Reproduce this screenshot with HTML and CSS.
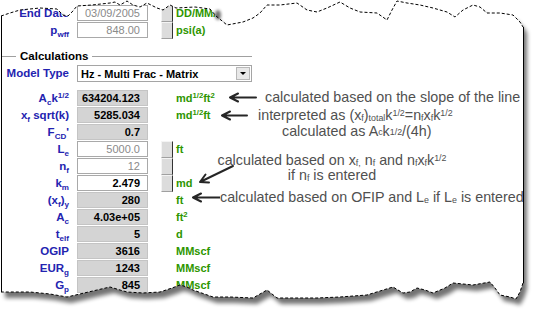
FILE: index.html
```html
<!DOCTYPE html>
<html lang="en">

<head>
    <meta charset="UTF-8">
    <title>Calculations</title>
    <link rel="stylesheet" href="styles.css">
</head>

<body>
    <div class="sheet">
        <div class="row">
            <span class="label">End Date</span>
            <span class="box">03/09/2005</span>
            <span class="btn"></span>
            <div class="tail"><span class="unit">DD/MM/YYYY</span></div>
        </div>
        <div class="row">
            <span class="label">p<sub>wff</sub></span>
            <span class="box">848.00</span>
            <span class="btn"></span>
            <div class="tail"><span class="unit">psi(a)</span></div>
        </div>

        <div class="legend"><span>Calculations</span></div>

        <div class="row model">
            <span class="label">Model Type</span>
            <div class="select">
                <span class="select-text">Hz - Multi Frac - Matrix</span>
                <span class="drop"><i class="tri"></i></span>
            </div>
        </div>

        <div class="calc">
            <div class="row">
                <span class="label">A<sub>c</sub>k<sup>1/2</sup></span>
                <span class="box val">634204.123</span>
                <div class="tail">
                    <span class="unit">md<sup>1/2</sup>ft<sup>2</sup></span>
                    <div class="note note-slope">
                        <svg class="arrow" width="28" height="11" viewBox="0 0 28 11"><path d="M1 5.5H27M1 5.5L9 1.5M1 5.5L9 9.5" /></svg>
                        <span>calculated based on the slope of the line</span>
                    </div>
                </div>
            </div>
            <div class="row">
                <span class="label">x<sub>f</sub> sqrt(k)</span>
                <span class="box val">5285.034</span>
                <div class="tail">
                    <span class="unit">md<sup>1/2</sup>ft</span>
                    <div class="note note-interp">
                        <svg class="arrow" width="27" height="11" viewBox="0 0 27 11"><path d="M1 5.5H26M1 5.5L9 1.5M1 5.5L9 9.5" /></svg>
                        <span>interpreted as (x<sub>f</sub>)<sub>total</sub>k<sup>1/2</sup>=n<sub>f</sub>x<sub>f</sub>k<sup>1/2</sup></span>
                    </div>
                </div>
            </div>
            <div class="row">
                <span class="label">F<sub>CD</sub>'</span>
                <span class="box val">0.7</span>
                <div class="tail">
                    <div class="note note-as">calculated as A<sub>c</sub>k<sup>1/2</sup>/(4h)</div>
                </div>
            </div>
            <div class="row">
                <span class="label">L<sub>e</sub></span>
                <span class="box">5000.0</span>
                <span class="btn"></span>
                <div class="tail">
                    <span class="unit">ft</span>
                    <div class="note note-block">
                        calculated based on x<sub>f,</sub> n<sub>f</sub> and n<sub>f</sub>x<sub>f</sub>k<sup>1/2</sup><br>
                        if n<sub>f</sub> is entered
                    </div>
                </div>
            </div>
            <div class="row">
                <span class="label">n<sub>f</sub></span>
                <span class="box">12</span>
                <span class="btn"></span>
            </div>
            <div class="row">
                <span class="label">k<sub>m</sub></span>
                <span class="box dark">2.479</span>
                <span class="btn"></span>
                <div class="tail">
                    <span class="unit">md</span>
                    <svg class="arrow diag" width="38" height="22" viewBox="0 0 38 22"><path d="M35 3L2 19M2 19L7.5 11.5M2 19L11 19.5" /></svg>
                </div>
            </div>
            <div class="row">
                <span class="label">(x<sub>f</sub>)<sub>y</sub></span>
                <span class="box val">280</span>
                <div class="tail">
                    <span class="unit">ft</span>
                    <div class="note note-ofip">
                        <svg class="arrow" width="28" height="11" viewBox="0 0 28 11"><path d="M1 5.5H28M1 5.5L9 1.5M1 5.5L9 9.5" /></svg>
                        <span>calculated based on OFIP and L<sub>e</sub> if L<sub>e</sub> is entered</span>
                    </div>
                </div>
            </div>
            <div class="row">
                <span class="label">A<sub>c</sub></span>
                <span class="box val">4.03e+05</span>
                <div class="tail"><span class="unit">ft<sup>2</sup></span></div>
            </div>
            <div class="row">
                <span class="label">t<sub>elf</sub></span>
                <span class="box val">5</span>
                <div class="tail"><span class="unit">d</span></div>
            </div>
            <div class="row">
                <span class="label">OGIP</span>
                <span class="box val">3616</span>
                <div class="tail"><span class="unit">MMscf</span></div>
            </div>
            <div class="row">
                <span class="label">EUR<sub>g</sub></span>
                <span class="box val">1243</span>
                <div class="tail"><span class="unit">MMscf</span></div>
            </div>
            <div class="row">
                <span class="label">G<sub>p</sub></span>
                <span class="box val">845</span>
                <div class="tail"><span class="unit">MMscf</span></div>
            </div>
        </div>
    </div>

    <!-- torn paper edges over the screenshot -->
    <svg class="torn" width="534" height="311" viewBox="0 0 534 311">
        <defs>
            <filter id="soft" x="-10%" y="-10%" width="120%" height="120%">
                <feGaussianBlur stdDeviation="2.2" />
            </filter>
            <filter id="blob" x="-50%" y="-50%" width="200%" height="200%">
                <feGaussianBlur stdDeviation="1.6" />
            </filter>
            <clipPath id="outside">
                <path clip-rule="evenodd" d="M0 0H534V311H0Z
                    M1 16L10 13L20 10L40 8L57 9L63 15L68 16L72 12L77 6L92 5L110 3L115 2L120 5L127 1L133 5L140 7L147 3L157 8L163 10L170 5L176 8L195 7L210 9L216 16L227 25L243 22L253 18L260 13L267 5L280 5L297 3L307 10L317 12L327 8L340 2L350 8L360 12L377 13L387 20L392 10L397 1L407 3L420 5L433 8L447 12L455 17L463 10L473 5L480 7L487 13L500 13L513 15L520 22L523 27
                    L523 283L520 292L516 299L510 297L500 295L495 288L490 282L473 285L453 283L445 288L433 293L425 290L417 288L410 292L403 293L393 287L380 291L367 295L340 297L317 298L277 298L272 294L267 290L260 294L253 298L230 297L213 297L193 290L187 287L180 285L172 288L160 292L143 293L127 292L120 290L110 287L97 290L80 294L67 297L50 294L30 292L1 292Z" />
            </clipPath>
        </defs>
        <path fill="#fff" fill-rule="evenodd" d="M0 0H534V311H0Z
            M1 16L10 13L20 10L40 8L57 9L63 15L68 16L72 12L77 6L92 5L110 3L115 2L120 5L127 1L133 5L140 7L147 3L157 8L163 10L170 5L176 8L195 7L210 9L216 16L227 25L243 22L253 18L260 13L267 5L280 5L297 3L307 10L317 12L327 8L340 2L350 8L360 12L377 13L387 20L392 10L397 1L407 3L420 5L433 8L447 12L455 17L463 10L473 5L480 7L487 13L500 13L513 15L520 22L523 27
            L523 283L520 292L516 299L510 297L500 295L495 288L490 282L473 285L453 283L445 288L433 293L425 290L417 288L410 292L403 293L393 287L380 291L367 295L340 297L317 298L277 298L272 294L267 290L260 294L253 298L230 297L213 297L193 290L187 287L180 285L172 288L160 292L143 293L127 292L120 290L110 287L97 290L80 294L67 297L50 294L30 292L1 292Z" />
        <g clip-path="url(#outside)">
            <path class="shade" transform="translate(4 6)" filter="url(#soft)" d="M1 16L10 13L20 10L40 8L57 9L63 15L68 16L72 12L77 6L92 5L110 3L115 2L120 5L127 1L133 5L140 7L147 3L157 8L163 10L170 5L176 8L195 7L210 9L216 16L227 25L243 22L253 18L260 13L267 5L280 5L297 3L307 10L317 12L327 8L340 2L350 8L360 12L377 13L387 20L392 10L397 1L407 3L420 5L433 8L447 12L455 17L463 10L473 5L480 7L487 13L500 13L513 15L520 22L523 27
            L523 283L520 292L516 299L510 297L500 295L495 288L490 282L473 285L453 283L445 288L433 293L425 290L417 288L410 292L403 293L393 287L380 291L367 295L340 297L317 298L277 298L272 294L267 290L260 294L253 298L230 297L213 297L193 290L187 287L180 285L172 288L160 292L143 293L127 292L120 290L110 287L97 290L80 294L67 297L50 294L30 292L1 292Z" />
        </g>
        <ellipse class="shade" cx="218" cy="15" rx="3" ry="5" filter="url(#blob)" />
        <path class="rip" d="M1 16L10 13L20 10L40 8L57 9L63 15L68 16L72 12L77 6L92 5L110 3L115 2L120 5L127 1L133 5L140 7L147 3L157 8L163 10L170 5L176 8L195 7L210 9L216 16L227 25L243 22L253 18L260 13L267 5L280 5L297 3L307 10L317 12L327 8L340 2L350 8L360 12L377 13L387 20L392 10L397 1L407 3L420 5L433 8L447 12L455 17L463 10L473 5L480 7L487 13L500 13L513 15L520 22L523 27" />
        <path class="rip" d="M523 283L520 292L516 299L510 297L500 295L495 288L490 282L473 285L453 283L445 288L433 293L425 290L417 288L410 292L403 293L393 287L380 291L367 295L340 297L317 298L277 298L272 294L267 290L260 294L253 298L230 297L213 297L193 290L187 287L180 285L172 288L160 292L143 293L127 292L120 290L110 287L97 290L80 294L67 297L50 294L30 292L1 292" />
        <path class="side" d="M1.5 16V292M523.5 27V283" />
    </svg>
</body>

</html>
```

FILE: styles.css
```css
* {
    margin: 0;
    padding: 0;
    box-sizing: border-box;
}

body {
    position: relative;
    width: 534px;
    height: 311px;
    overflow: hidden;
    background: #fff;
    font-family: "Liberation Sans", Arial, Helvetica, sans-serif;
}

.sheet {
    padding: 5px 0 0 2px;
}

sub,
sup {
    font-size: 70%;
    line-height: 0;
}

sub {
    vertical-align: -3px;
}

sup {
    vertical-align: 4px;
}

.row {
    display: grid;
    grid-template-columns: 75px 71px 28px 1fr;
    height: 17px;
    align-items: start;
}

.label {
    padding-right: 8px;
    text-align: right;
    font-size: 11.5px;
    font-weight: bold;
    line-height: 16px;
    color: #2323b0;
    white-space: nowrap;
}

.box {
    height: 16px;
    border: 1px solid #a9a9a9;
    background: #fff;
    padding-right: 7px;
    text-align: right;
    font-size: 11px;
    line-height: 14px;
    color: #8a8a8a;
}

/* calculated (read only) values */
.box.val {
    background: #d4d4d4;
    border-color: #c4c4c4;
    color: #000;
    font-weight: bold;
}

.box.dark {
    color: #000;
    font-weight: bold;
}

.btn {
    width: 12px;
    height: 17px;
    margin-left: 13px;
    background: #dcdcdc;
    border-top: 1px solid #f4f4f4;
    border-left: 1px solid #f4f4f4;
    border-bottom: 1px solid #a0a0a0;
    border-right: 1px solid #333;
}

.tail {
    grid-column: 4;
    display: grid;
    align-items: start;
    white-space: nowrap;
}

/* unit and callout share the same cell */
.tail > * {
    grid-area: 1 / 1;
}

.unit {
    font-size: 11px;
    font-weight: bold;
    line-height: 16px;
    color: #2e9600;
}

.legend {
    display: flex;
    align-items: center;
    gap: 4px;
    width: 250px;
    height: 14px;
    margin-top: 10px;
    font-size: 11.5px;
    font-weight: bold;
    color: #000;
}

.legend::before,
.legend::after {
    content: "";
    height: 1px;
    background: #a0a0a0;
}

.legend::before {
    width: 14px;
}

.legend::after {
    flex: 1;
}

.model {
    margin-top: 2px;
}

.select {
    grid-column: 2 / 5;
    display: flex;
    align-items: center;
    width: 175px;
    height: 17px;
    border: 1px solid #a5a5a5;
    background: #fff;
}

.select-text {
    padding-left: 3px;
    font-size: 11px;
    font-weight: bold;
    color: #000;
}

.drop {
    display: flex;
    align-items: center;
    justify-content: center;
    width: 14px;
    height: 13px;
    margin: 0 1px 0 auto;
    background: #e8e8e8;
    border: 1px solid #b8b8b8;
}

.tri {
    border-left: 3px solid transparent;
    border-right: 3px solid transparent;
    border-top: 3px solid #000;
}

.calc {
    margin-top: 8px;
}

.note {
    display: flex;
    align-items: center;
    font-size: 14.3px;
    line-height: 17px;
    color: #505050;
}

.note sub,
.note sup {
    font-size: 62%;
}

.note sub {
    vertical-align: -1px;
}

.note sup {
    vertical-align: 4px;
}

.arrow path {
    fill: none;
    stroke: #262626;
    stroke-width: 2;
    stroke-linecap: round;
}

.note-slope {
    margin: -1px 0 0 53px;
    gap: 8px;
}

.note-interp {
    margin-left: 45px;
    gap: 10px;
}

.note-as {
    margin: -1px 0 0 106px;
}

.note-block {
    display: block;
    width: 230px;
    margin: 12px 0 0 41px;
    line-height: 15px;
    text-align: center;
}

.diag {
    margin: -12px 0 0 22px;
}

.note-ofip {
    margin: -3px 0 0 16px;
}

.torn {
    position: absolute;
    left: 0;
    top: 0;
    pointer-events: none;
}

.shade {
    fill: #000;
    opacity: 0.55;
}

.rip {
    fill: none;
    stroke: #000;
    stroke-width: 1;
    stroke-dasharray: 3 2;
}

.side {
    fill: none;
    stroke: #000;
    stroke-width: 1;
}
```
